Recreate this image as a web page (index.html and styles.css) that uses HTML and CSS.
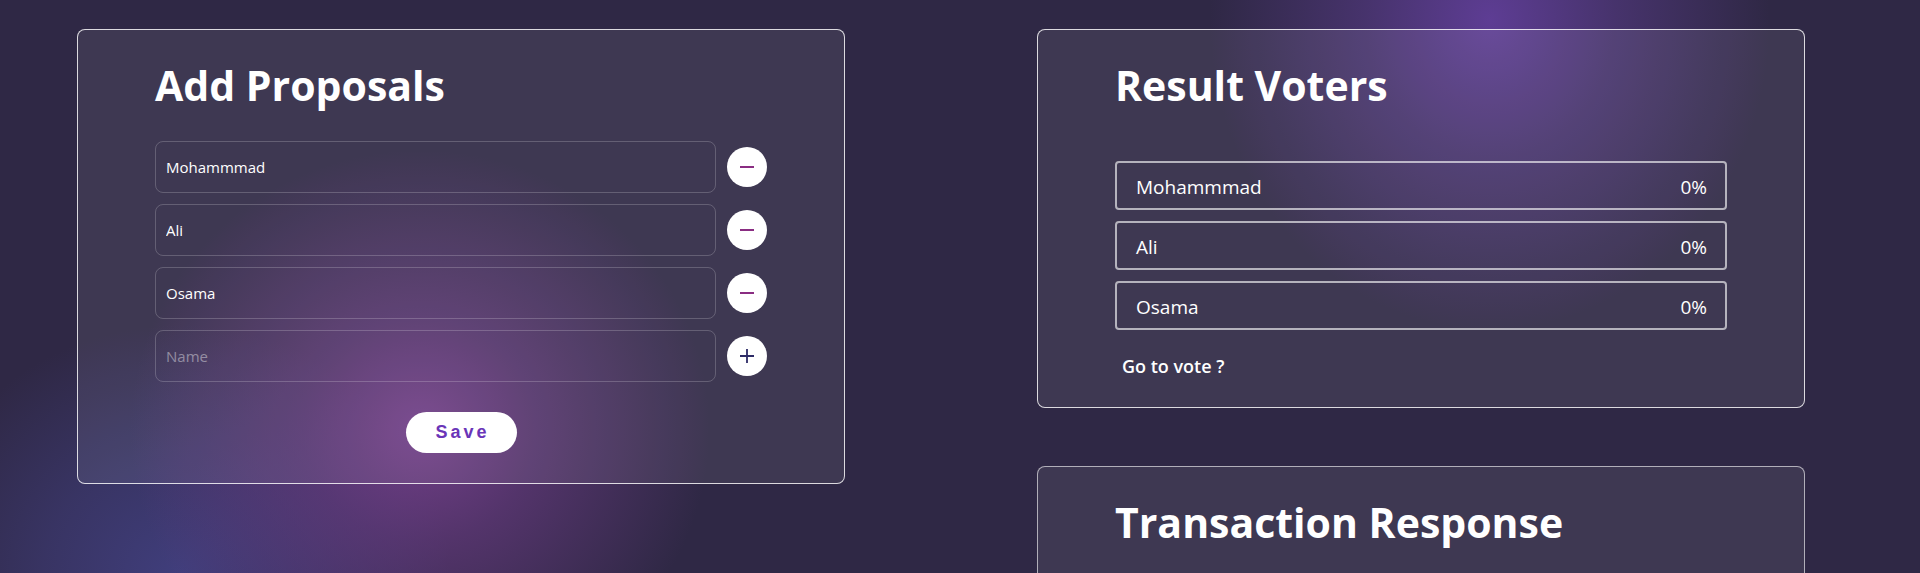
FILE: index.html
```html
<!DOCTYPE html>
<html lang="en">
<head>
<meta charset="utf-8">
<title>Voting dApp</title>
<link rel="stylesheet" href="styles.css">
</head>
<body>
<main class="page">
  <section class="col col-left">
    <div class="card">
      <h1 class="card-title">Add Proposals</h1>
      <div class="proposal-list">
        <div class="proposal-row">
          <input class="proposal-input" type="text" value="Mohammmad">
          <button class="circle-btn remove" type="button" aria-label="Remove">
            <svg viewBox="0 0 16 16" width="16" height="16"><path d="M1 8h14" stroke="currentColor" stroke-width="2" fill="none"/></svg>
          </button>
        </div>
        <div class="proposal-row">
          <input class="proposal-input" type="text" value="Ali">
          <button class="circle-btn remove" type="button" aria-label="Remove">
            <svg viewBox="0 0 16 16" width="16" height="16"><path d="M1 8h14" stroke="currentColor" stroke-width="2" fill="none"/></svg>
          </button>
        </div>
        <div class="proposal-row">
          <input class="proposal-input" type="text" value="Osama">
          <button class="circle-btn remove" type="button" aria-label="Remove">
            <svg viewBox="0 0 16 16" width="16" height="16"><path d="M1 8h14" stroke="currentColor" stroke-width="2" fill="none"/></svg>
          </button>
        </div>
        <div class="proposal-row">
          <input class="proposal-input" type="text" placeholder="Name">
          <button class="circle-btn add" type="button" aria-label="Add">
            <svg viewBox="0 0 16 16" width="16" height="16"><path d="M1 8h14M8 1v14" stroke="currentColor" stroke-width="1.8" fill="none"/></svg>
          </button>
        </div>
      </div>
      <div class="save-wrap">
        <button class="save-btn" type="button">Save</button>
      </div>
    </div>
  </section>
  <section class="col col-right">
    <div class="card card-results">
      <h1 class="card-title">Result Voters</h1>
      <ul class="result-list">
        <li class="result-row"><span>Mohammmad</span><span>0%</span></li>
        <li class="result-row"><span>Ali</span><span>0%</span></li>
        <li class="result-row"><span>Osama</span><span>0%</span></li>
      </ul>
      <a class="vote-link" href="#">Go to vote ?</a>
    </div>
    <div class="card card-tx">
      <h1 class="card-title">Transaction Response</h1>
    </div>
  </section>
</main>
</body>
</html>
```

FILE: styles.css
```css
* { box-sizing: border-box; }

html, body {
  margin: 0;
  height: 573px;
  overflow: hidden;
}

body {
  font-family: "Open Sans", "Noto Sans", sans-serif;
  color: #ffffff;
  background-color: #2f2845;
  background-image:
    radial-gradient(ellipse 290px 280px at 420px 430px, rgba(118, 64, 140, 0.95) 0%, rgba(108, 60, 132, 0.6) 40%, rgba(47, 40, 69, 0) 100%),
    radial-gradient(ellipse 270px 250px at 180px 575px, rgba(64, 62, 124, 1) 0%, rgba(64, 62, 124, 0.55) 50%, rgba(47, 40, 69, 0) 100%),
    radial-gradient(ellipse 280px 310px at 1490px 20px, rgba(96, 62, 152, 0.95) 0%, rgba(90, 60, 140, 0.55) 45%, rgba(47, 40, 69, 0) 100%);
  background-repeat: no-repeat;
}

.page {
  display: flex;
  gap: 192px;
  padding: 29px 0 0 77px;
}

.col {
  width: 768px;
  display: flex;
  flex-direction: column;
  gap: 58px;
}

.card {
  width: 768px;
  border: 1px solid rgba(255, 255, 255, 0.82);
  border-radius: 8px;
  background: rgba(255, 255, 255, 0.075);
  padding: 31px 77px 30px;
}

.card-title {
  margin: 0;
  font-size: 41px;
  line-height: 48px;
  font-weight: 700;
  color: #ffffff;
}

.proposal-list {
  margin-top: 32px;
  display: flex;
  flex-direction: column;
  gap: 11px;
}

.proposal-row {
  display: flex;
  align-items: center;
  gap: 11px;
}

.proposal-input {
  width: 561px;
  height: 52px;
  border: 1.5px solid rgba(255, 255, 255, 0.2);
  border-radius: 8px;
  background: transparent;
  padding: 0 10px;
  font-family: "Open Sans", "Noto Sans", sans-serif;
  font-size: 15px;
  color: #ffffff;
  outline: none;
}

.proposal-input::placeholder {
  color: rgba(255, 255, 255, 0.42);
}

.circle-btn {
  width: 40px;
  height: 40px;
  flex: 0 0 40px;
  border: none;
  border-radius: 50%;
  background: #ffffff;
  padding: 0;
  display: flex;
  align-items: center;
  justify-content: center;
}

.circle-btn svg { display: block; }

.circle-btn.remove { color: #8a2d82; }
.circle-btn.add { color: #2d2b66; }

.save-wrap {
  margin-top: 30px;
  display: flex;
  justify-content: center;
}

.save-btn {
  width: 111px;
  height: 41px;
  border: none;
  border-radius: 21px;
  background: #ffffff;
  color: #6a35b8;
  font-family: "Liberation Sans", Arial, sans-serif;
  font-weight: 700;
  font-size: 18px;
  letter-spacing: 3px;
  padding: 0 0 0 3px;
}

.card-results {
  padding-bottom: 29px;
}

.result-list {
  list-style: none;
  margin: 52px 0 0;
  padding: 0;
  display: flex;
  flex-direction: column;
  gap: 11px;
}

.result-row {
  height: 49px;
  border: 2px solid rgba(255, 255, 255, 0.62);
  border-radius: 4px;
  display: flex;
  align-items: center;
  justify-content: space-between;
  padding: 2px 18px 0 19px;
  font-size: 19px;
  color: #ffffff;
}

.vote-link {
  display: inline-block;
  margin: 24px 0 0 7px;
  font-size: 18px;
  line-height: 24px;
  font-weight: 600;
  color: #ffffff;
  text-decoration: none;
}

.card-tx {
  height: 320px;
  border-color: rgba(255, 255, 255, 0.6);
}
```
